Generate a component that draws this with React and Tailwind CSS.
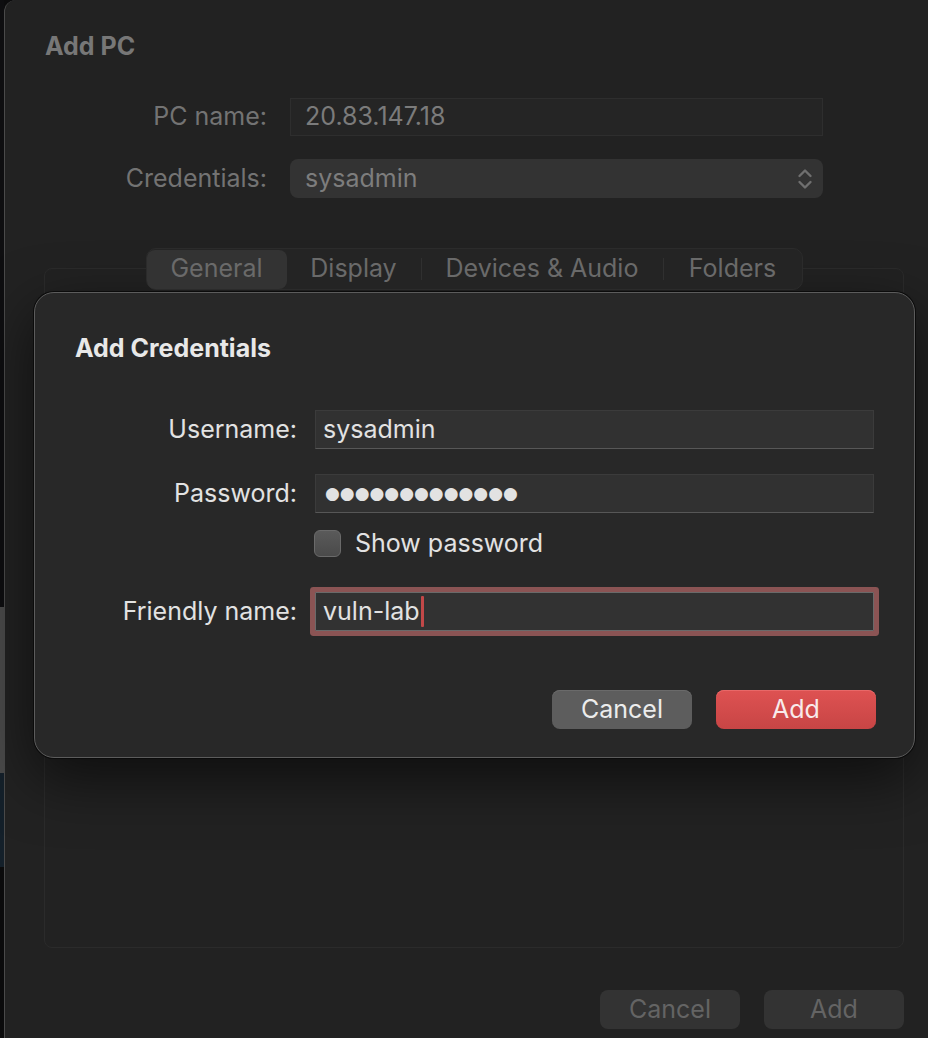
import React from "react"

function Chevrons() {
  return (
    <svg width="18" height="26" viewBox="0 0 18 26" fill="none" className="shrink-0">
      <path d="M3.5 10 L9 4.5 L14.5 10" stroke="#6f6f6f" strokeWidth="2.4" strokeLinecap="round" strokeLinejoin="round" />
      <path d="M3.5 16 L9 21.5 L14.5 16" stroke="#6f6f6f" strokeWidth="2.4" strokeLinecap="round" strokeLinejoin="round" />
    </svg>
  )
}

function Tabs() {
  return (
    <div className="relative z-10 mx-auto flex h-[42px] w-[657px] items-center rounded-[10px] border border-[#2b2b2b] bg-[#242424] text-[25px] text-[#6a6a6a]">
      <div className="flex h-[39px] w-[140px] items-center justify-center rounded-[8px] bg-[#333333]">General</div>
      <div className="flex w-[134px] justify-center">Display</div>
      <div className="h-[22px] w-px bg-[#303030]" />
      <div className="flex w-[241px] justify-center">Devices &amp; Audio</div>
      <div className="h-[22px] w-px bg-[#303030]" />
      <div className="flex flex-1 justify-center">Folders</div>
    </div>
  )
}

function Row({ label, className = "", children }) {
  return (
    <div className={`flex items-center gap-[18px] ${className}`}>
      <span className="w-[222px] text-right">{label}</span>
      {children}
    </div>
  )
}

function SheetInput({ children }) {
  return (
    <div className="flex h-[39px] w-[559px] items-center border border-[#3b3b3b] border-b-[#575757] bg-[#313131] px-[7px]">
      {children}
    </div>
  )
}

function CredentialsSheet() {
  return (
    <div className="absolute left-[34px] top-[292px] flex h-[466px] w-[881px] flex-col rounded-[20px] border border-[#5c5c5c] bg-[#282828] pl-[40px] pr-[38px] pt-[39px] text-[25px] text-[#e2e2e2] shadow-[0_0_0_1px_#0b0b0b,0_20px_60px_rgba(0,0,0,0.6)]">
      <h2 className="font-bold leading-[32px] text-[#e8e8e8]">Add Credentials</h2>

      <Row label="Username:" className="mt-[46px] h-[39px]">
        <SheetInput>sysadmin</SheetInput>
      </Row>

      <Row label="Password:" className="mt-[25px] h-[39px]">
        <SheetInput>
          <span className="pl-[2px] font-[family-name:'DejaVu_Sans',sans-serif] text-[17px] leading-none">●●●●●●●●●●●●●</span>
        </SheetInput>
      </Row>

      <Row label="" className="mt-[17px] h-[27px]">
        <label className="flex items-center gap-[14px] leading-[27px]">
          <span className="-ml-px h-[27px] w-[27px] rounded-[6px] border border-[#6a6a6a] bg-gradient-to-b from-[#5a5a5a] to-[#4a4a4a]" />
          <span>Show password</span>
        </label>
      </Row>

      <Row label="Friendly name:" className="mt-[35px] h-[39px]">
        <div className="flex h-[39px] w-[559px] items-center rounded-[1px] border border-[#6a6a6a] bg-[#323232] px-[7px] shadow-[0_0_0_5px_#8b5454]">
          <span>vuln-lab</span>
          <span className="ml-px h-[31px] w-[3px] rounded-[1px] bg-[#c24848]" />
        </div>
      </Row>

      <div className="mt-[59px] flex justify-end gap-[24px]">
        <button className="h-[39px] w-[140px] rounded-[8px] bg-[#5d5d5d] text-[#ececec] shadow-[inset_0_1px_0_#6a6a6a]">Cancel</button>
        <button className="h-[39px] w-[160px] rounded-[8px] bg-gradient-to-b from-[#de5252] to-[#c84545] text-[#f8eaea] shadow-[inset_0_1px_0_#e86868]">Add</button>
      </div>
    </div>
  )
}

export default function App() {
  return (
    <div className="relative flex h-[1038px] w-[928px] overflow-hidden bg-[#0c0c0d] font-[family-name:Inter,'Noto_Sans',sans-serif]">
      <div className="flex w-[4px] flex-col">
        <div className="h-[607px] bg-[#0e0e10]" />
        <div className="h-[166px] bg-[#4a4a4a]" />
        <div className="h-[94px] bg-[#14202a]" />
        <div className="flex-1 bg-[#0b0b0c]" />
      </div>

      <div className="flex flex-1 flex-col rounded-tl-[12px] border-l border-[#4a4a4a] bg-[#222222] pl-[39px] pt-[30px]">
        <h1 className="pl-px text-[25px] font-bold leading-[32px] text-[#777777]">Add PC</h1>

        <div className="mt-[36px] grid grid-cols-[223px_533px] items-center gap-x-[23px] text-[25px]">
          <span className="text-right text-[#737373]">PC name:</span>
          <div className="flex h-[38px] items-center border border-[#2e2e2e] bg-[#252525] px-[14px] text-[#7b7b7b]">20.83.147.18</div>

          <span className="mt-[23px] text-right text-[#737373]">Credentials:</span>
          <div className="mt-[23px] flex h-[39px] items-center justify-between rounded-[8px] bg-[#333333] pl-[15px] pr-[9px] text-[#7d7d7d]">
            <span>sysadmin</span>
            <Chevrons />
          </div>
        </div>

        <div className="mt-[50px] w-[860px]">
          <Tabs />
          <div className="-mt-[22px] h-[680px] rounded-[8px] border border-[#2b2b2b] bg-[#222222] pl-[247px] pt-[459px]">
            <div className="flex h-[26px] items-center gap-[12px] text-[25px] leading-[26px] text-[#343434]">
              <span className="h-[26px] w-[26px] rounded-[6px] border border-[#363636] bg-[#2a2a2a]" />
              <span>Swap mouse buttons</span>
            </div>
          </div>
        </div>

        <div className="mt-[42px] flex w-[860px] justify-end gap-[24px] text-[25px] text-[#646464]">
          <button className="h-[39px] w-[140px] rounded-[8px] bg-[#333333]">Cancel</button>
          <button className="h-[39px] w-[140px] rounded-[8px] bg-[#333333]">Add</button>
        </div>
      </div>

      <CredentialsSheet />
    </div>
  )
}
